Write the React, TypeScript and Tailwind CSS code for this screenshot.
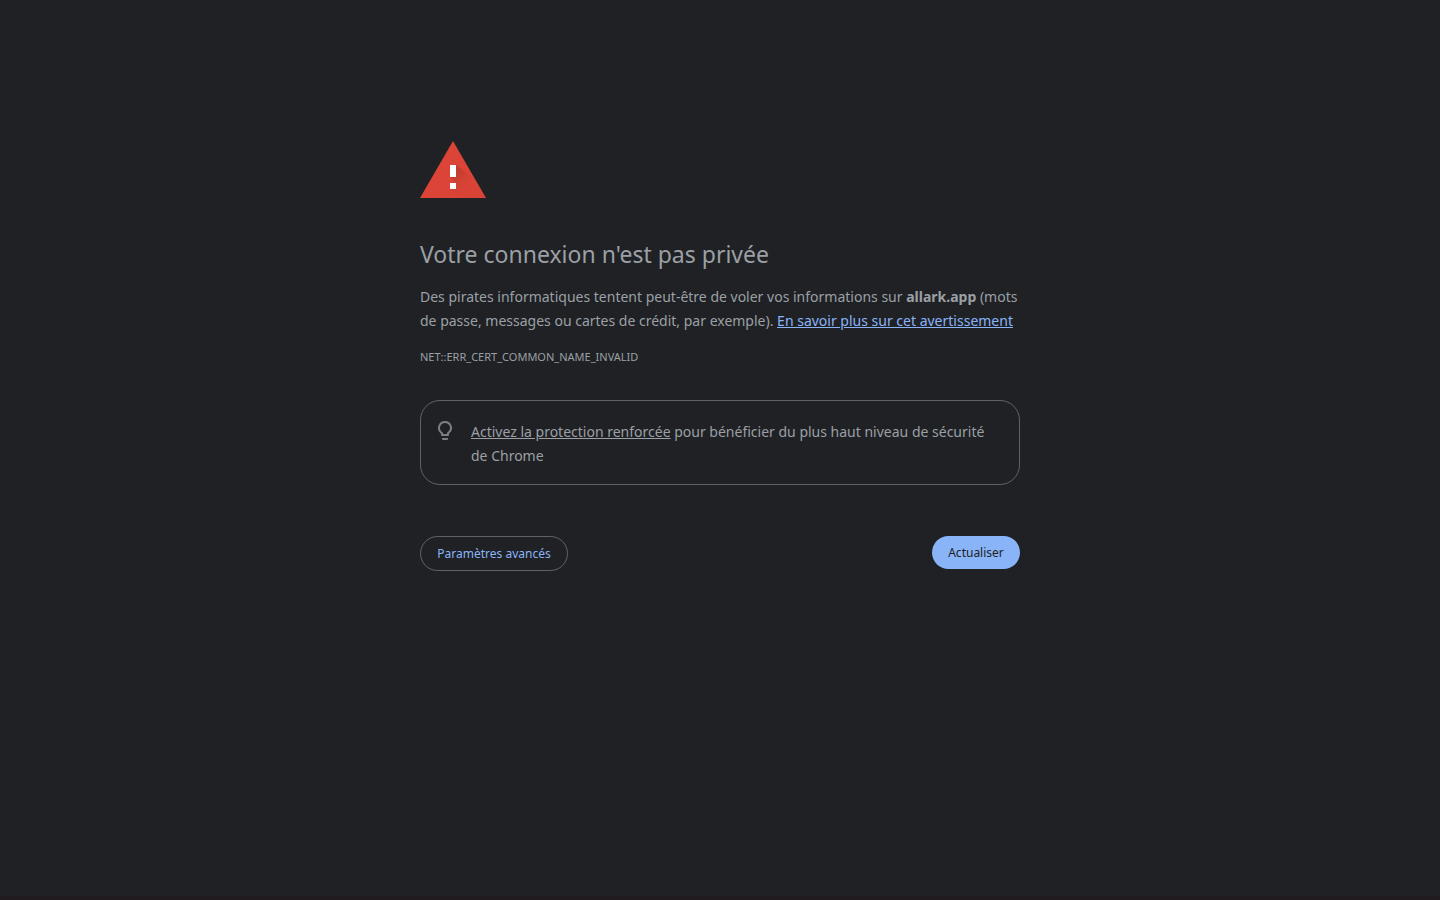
import { useState } from 'react'

const HOST = 'allark.app'
const ERROR_CODE = 'NET::ERR_CERT_COMMON_NAME_INVALID'

function WarningIcon() {
  return (
    <svg width="66" height="57" viewBox="0 0 66 57" aria-hidden="true">
      <defs>
        <linearGradient id="shade" x1="33" y1="30" x2="47" y2="44" gradientUnits="userSpaceOnUse">
          <stop offset="0" stopColor="#b0382d" stopOpacity="0.75" />
          <stop offset="1" stopColor="#c53d31" stopOpacity="0.1" />
        </linearGradient>
      </defs>
      <path d="M33 0L66 57H0z" fill="#db4437" />
      <path d="M36 24l19.500 15L66 57H39l-9-9 6-6-6-6z" fill="url(#shade)" />
      <path d="M30 24h6v12h-6zM30 42h6v6h-6z" fill="#fff" />
    </svg>
  )
}

function BulbIcon() {
  return (
    <svg width="24" height="24" viewBox="0 0 24 24" fill="#7b7e82" aria-hidden="true" className="shrink-0">
      <path d="M9 20h6v1a1 1 0 0 1-1 1h-4a1 1 0 0 1-1-1zM12 3a7 7 0 0 0-4 12.740V17a1 1 0 0 0 1 1h6a1 1 0 0 0 1-1v-1.260A7 7 0 0 0 12 3zm2.850 11.100l-.85.6V16h-4v-1.300l-.85-.6A5 5 0 1 1 17 10a5 5 0 0 1-2.150 4.100z" transform="translate(0 -2)" />
    </svg>
  )
}

export default function App() {
  const [advanced, setAdvanced] = useState(false)

  return (
    <div className="min-h-screen border-b-4 border-[#211a1e] bg-[#202124] px-6 font-['Noto_Sans','Open_Sans',sans-serif] text-sm leading-6 text-[#9aa0a6]">
      <main className="mx-auto max-w-[600px] pt-[141px]">
        <WarningIcon />

        <h1 className="mt-10 text-[23px] leading-8">Votre connexion n'est pas privée</h1>
        <p className="mt-[15px]">
          Des pirates informatiques tentent peut-être de voler vos informations sur <strong>{HOST}</strong> (mots de
          passe, messages ou cartes de crédit, par exemple).{' '}
          <a href="#learn-more" className="text-[#8ab4f8] underline">En savoir plus sur cet avertissement</a>
        </p>
        <p className="mt-3 text-[11px]">{ERROR_CODE}</p>

        {/* protection renforcée */}
        <div className="mt-[31px] flex gap-3.5 rounded-[20px] border border-[#5f6368] pt-[19px] pr-4 pb-4 pl-3">
          <BulbIcon />
          <p>
            <a href="#enhanced-protection" className="underline">Activez la protection renforcée</a> pour bénéficier du
            plus haut niveau de sécurité de Chrome
          </p>
        </div>

        <div className="mt-[51px] flex items-start justify-between text-xs">
          <button
            type="button"
            aria-expanded={advanced}
            onClick={() => setAdvanced(!advanced)}
            className="h-[35px] min-w-[148px] rounded-full border border-[#5f6368] px-4 text-[#8ab4f8]"
          >
            Paramètres avancés
          </button>
          <button
            type="button"
            onClick={() => window.location.reload()}
            className="h-[33px] min-w-[88px] rounded-full bg-[#8ab4f8] px-4 text-[#202124]"
          >
            Actualiser
          </button>
        </div>
      </main>
    </div>
  )
}
